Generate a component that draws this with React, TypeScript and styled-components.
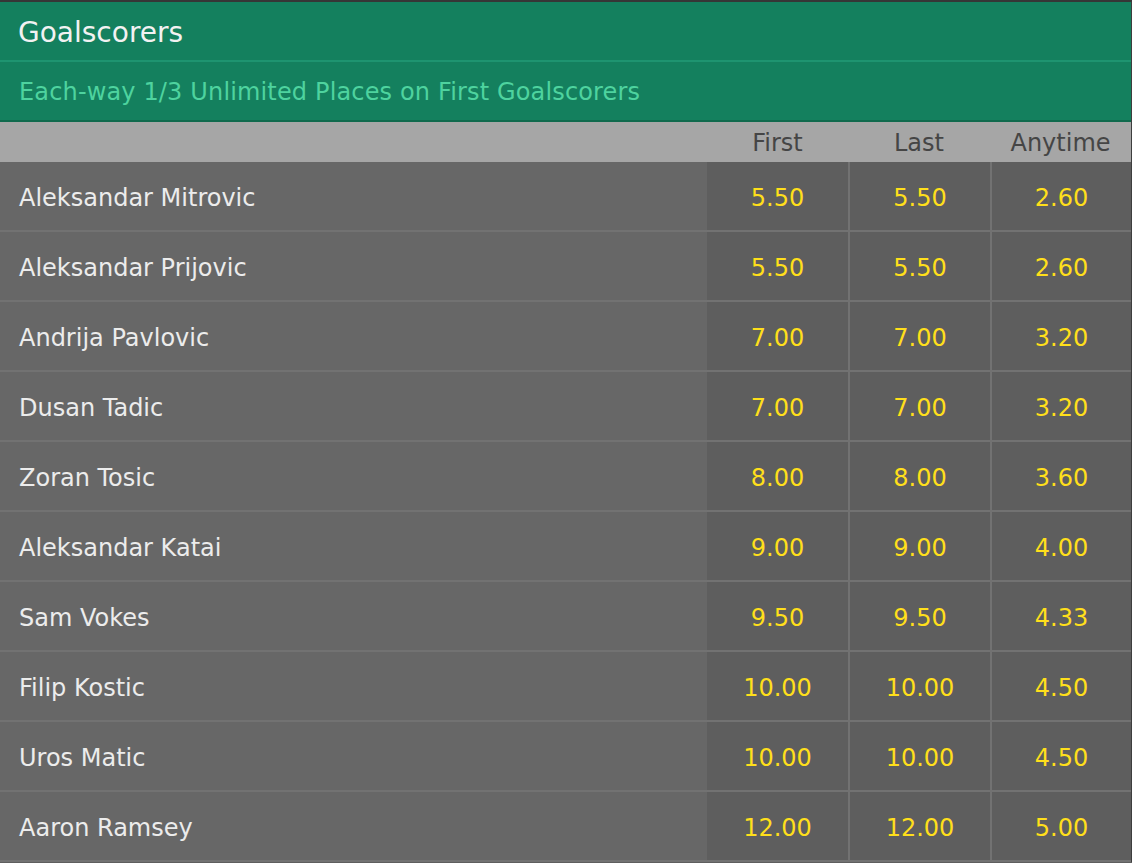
import React from 'react';
import styled, { createGlobalStyle } from 'styled-components';

const GlobalStyle = createGlobalStyle`
  html, body {
    margin: 0;
    padding: 0;
    background: #5e5e5e;
  }
  body {
    font-family: 'DejaVu Sans', Verdana, sans-serif;
  }
`;

const Panel = styled.div`
  width: 1131px;
  border-top: 2px solid #363636;
  border-right: 1px solid #3e3e3e;
  background: #676767;
`;

const Title = styled.div`
  height: 60px;
  box-sizing: border-box;
  display: flex;
  align-items: center;
  padding: 2px 0 0 18px;
  background: #14805e;
  border-bottom: 2px solid #1e9470;
  color: #f2f2f2;
  font-size: 28px;
`;

const Terms = styled.div`
  height: 60px;
  box-sizing: border-box;
  display: flex;
  align-items: center;
  padding: 2px 0 0 19px;
  background: #14805e;
  border-bottom: 2px solid #0f6a4d;
  color: #4ed39f;
  font-size: 24px;
  letter-spacing: 0.15px;
`;

const Grid = styled.div`
  display: grid;
  grid-template-columns: 707px 141px 142px 141px;
`;

const HeadCell = styled.div`
  height: 40px;
  box-sizing: border-box;
  display: flex;
  align-items: center;
  justify-content: center;
  padding-top: 1px;
  background: #a6a6a6;
  color: #454545;
  font-size: 24px;
`;

const NameCell = styled.div`
  height: 70px;
  box-sizing: border-box;
  display: flex;
  align-items: center;
  padding: 3px 0 0 19px;
  background: #676767;
  border-bottom: 2px solid #727272;
  color: #ececec;
  font-size: 24px;
`;

const OddsCell = styled.div<{ $divider?: boolean }>`
  height: 70px;
  box-sizing: border-box;
  display: flex;
  align-items: center;
  justify-content: center;
  padding-top: 3px;
  background: #5e5e5e;
  border-bottom: 2px solid #727272;
  border-left: ${(p) => (p.$divider ? '2px solid #727272' : 'none')};
  color: #ffdf1b;
  font-size: 24px;
`;

const scorers: [string, string, string, string][] = [
  ['Aleksandar Mitrovic', '5.50', '5.50', '2.60'],
  ['Aleksandar Prijovic', '5.50', '5.50', '2.60'],
  ['Andrija Pavlovic', '7.00', '7.00', '3.20'],
  ['Dusan Tadic', '7.00', '7.00', '3.20'],
  ['Zoran Tosic', '8.00', '8.00', '3.60'],
  ['Aleksandar Katai', '9.00', '9.00', '4.00'],
  ['Sam Vokes', '9.50', '9.50', '4.33'],
  ['Filip Kostic', '10.00', '10.00', '4.50'],
  ['Uros Matic', '10.00', '10.00', '4.50'],
  ['Aaron Ramsey', '12.00', '12.00', '5.00'],
];

const App: React.FC = () => {
  return (
    <Panel>
      <GlobalStyle />
      <Title>Goalscorers</Title>
      <Terms>Each-way 1/3 Unlimited Places on First Goalscorers</Terms>
      <Grid>
        <HeadCell />
        <HeadCell>First</HeadCell>
        <HeadCell>Last</HeadCell>
        <HeadCell>Anytime</HeadCell>
        {scorers.map(([name, first, last, anytime]) => (
          <React.Fragment key={name}>
            <NameCell>{name}</NameCell>
            <OddsCell>{first}</OddsCell>
            <OddsCell $divider>{last}</OddsCell>
            <OddsCell $divider>{anytime}</OddsCell>
          </React.Fragment>
        ))}
      </Grid>
    </Panel>
  );
};

export default App;
